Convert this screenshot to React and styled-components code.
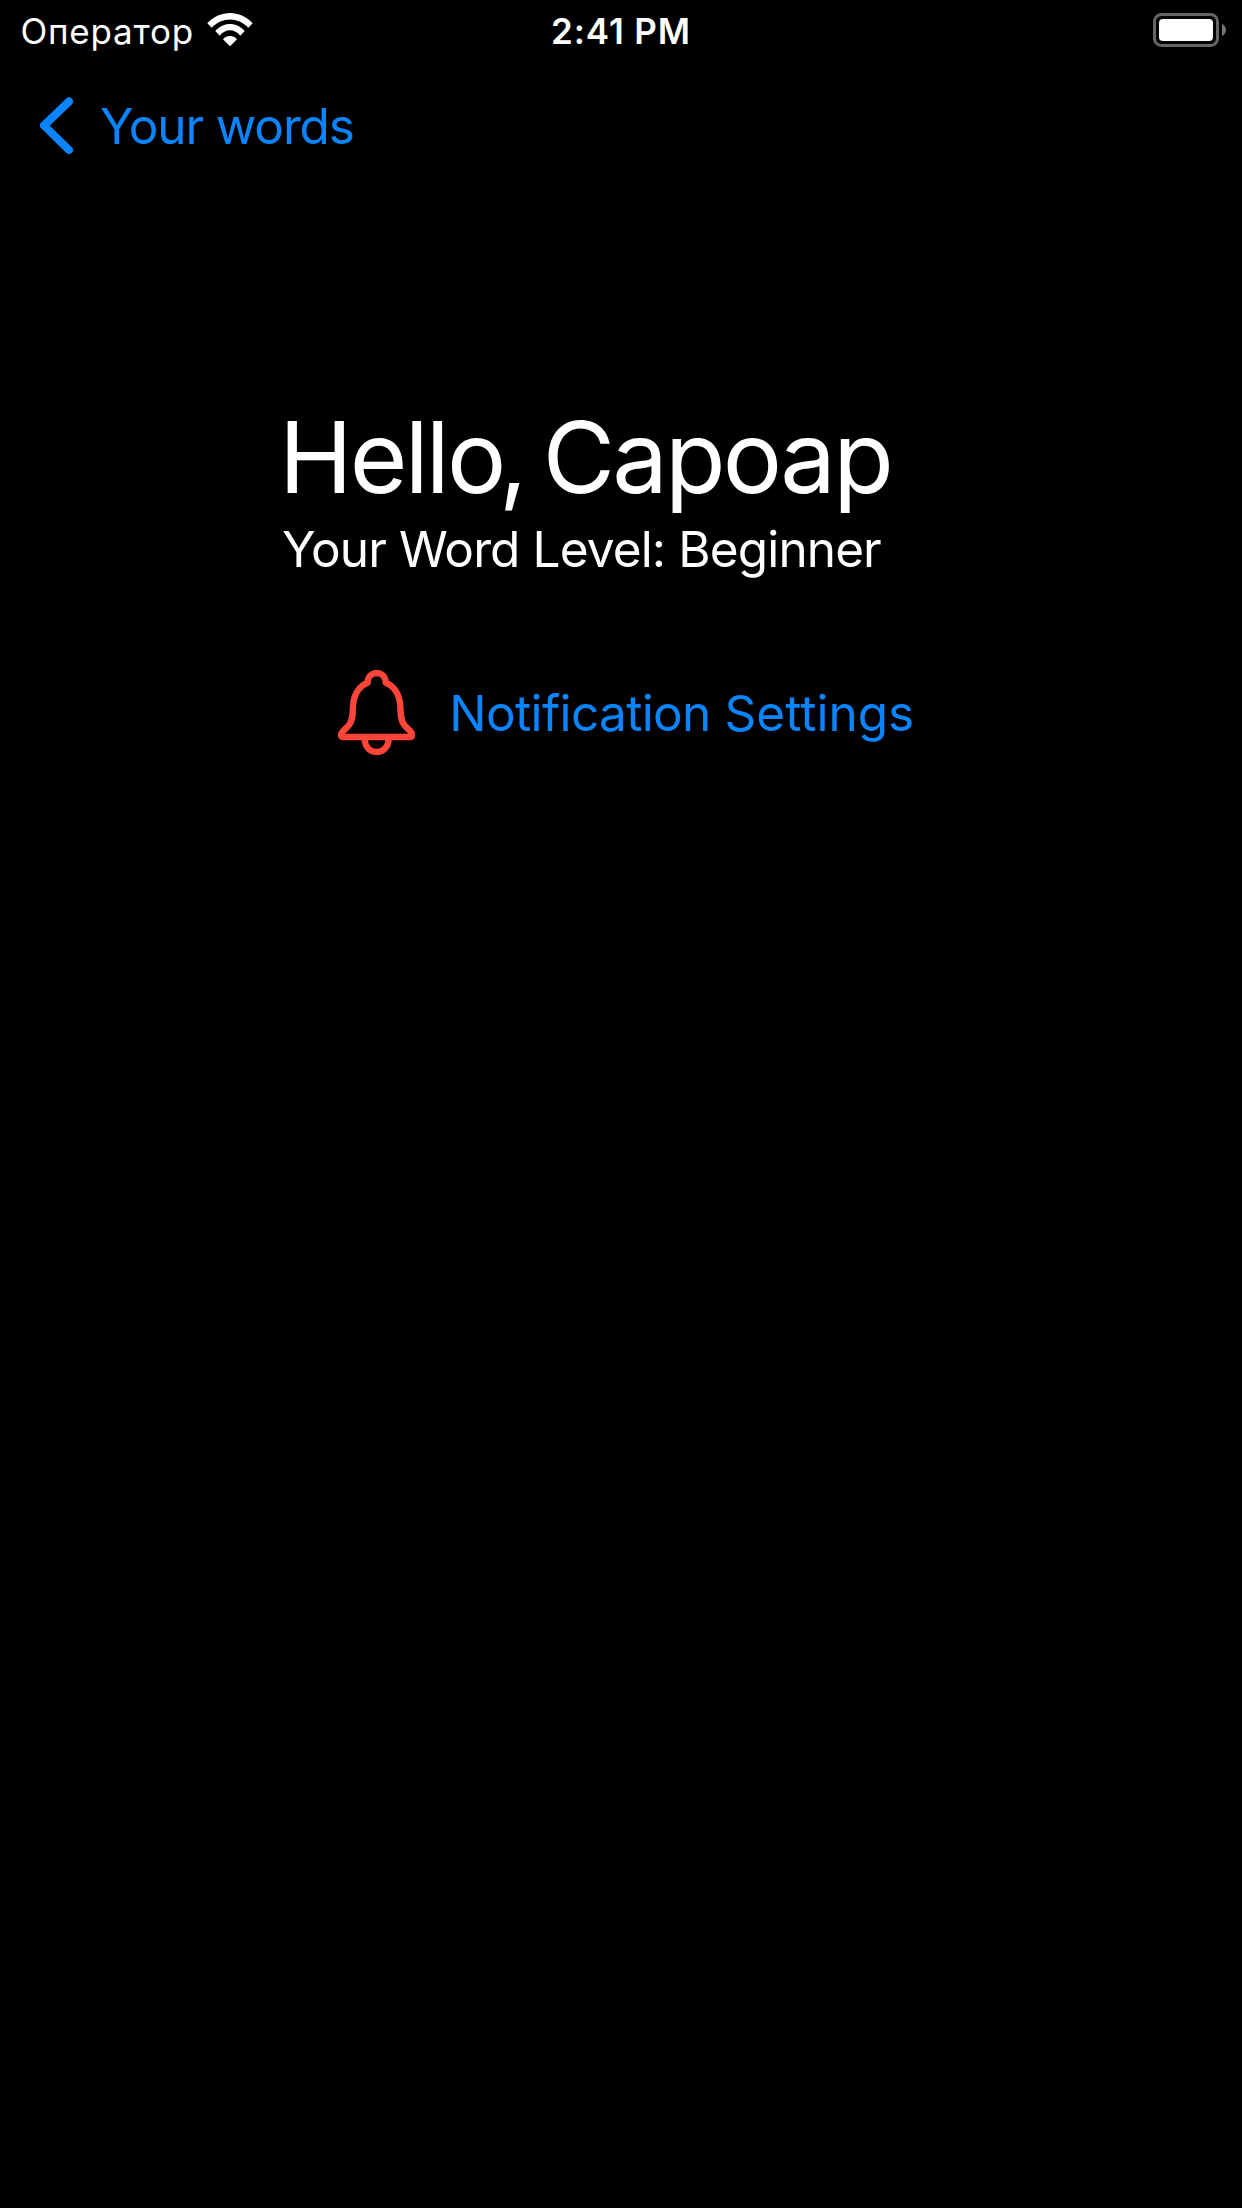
import React from "react";
import styled, { createGlobalStyle } from "styled-components";

const GlobalStyle = createGlobalStyle`
  html, body { margin: 0; padding: 0; background: #000; }
`;

const Screen = styled.main`
  display: flex;
  flex-direction: column;
  width: 1242px;
  height: 2208px;
  overflow: hidden;
  background: #000;
  color: #fff;
  font-family: Inter, "Liberation Sans", sans-serif;
`;

const StatusBar = styled.header`
  display: grid;
  grid-template-columns: 1fr auto 1fr;
  height: 60px;
  box-sizing: border-box;
  padding: 11px 16px 0;
`;

const Carrier = styled.div`
  display: flex;
  align-items: flex-start;
  gap: 13px;
  padding-left: 4.5px;
`;

const StatusText = styled.span`
  font-size: 35px;
  line-height: 40px;
  font-weight: ${(p) => p.$weight || 400};
  letter-spacing: ${(p) => p.$tracking || "0"};
  white-space: nowrap;
`;

const WifiIcon = styled.svg`
  display: block;
  width: 46px;
  height: 34px;
  margin-top: 2px;
`;

const BatteryIcon = styled.svg`
  display: block;
  justify-self: end;
  width: 73px;
  height: 34px;
  margin-top: 2px;
`;

const NavBar = styled.nav`
  display: flex;
  height: 132px;
  box-sizing: border-box;
  padding: 36px 40px 0;
`;

const BackButton = styled.button`
  display: flex;
  align-items: flex-start;
  gap: 26px;
  height: 60px;
  padding: 0;
  border: 0;
  background: none;
  color: #0a84ff;
  font: inherit;
`;

const Chevron = styled.svg`
  display: block;
  width: 34px;
  height: 58px;
  margin-top: 1px;
`;

const Label = styled.span`
  font-size: 49.5px;
  line-height: 60px;
  letter-spacing: ${(p) => p.$tracking || "0"};
  white-space: nowrap;
`;

const Tracked = styled.span`
  letter-spacing: ${(p) => p.$tracking};
`;

const Profile = styled.section`
  display: flex;
  flex-direction: column;
  align-items: flex-start;
  padding: 205px 0 0 282px;
`;

const Greeting = styled.h1`
  margin: 0 0 2px -3px;
  font-size: 99px;
  line-height: 120px;
  font-weight: 400;
  letter-spacing: -2.8px;
  word-spacing: -7px;
  white-space: nowrap;
`;

const SettingsLink = styled.button`
  display: flex;
  align-items: flex-start;
  gap: 34px;
  margin: 91px 0 0 56px;
  padding: 0;
  border: 0;
  background: none;
  color: #0a84ff;
  font: inherit;

  ${Label} {
    margin-top: 13px;
  }
`;

const BellIcon = styled.svg`
  display: block;
  width: 77.33px;
  height: 85.33px;
`;

export default function App() {
  return (
    <Screen>
      <GlobalStyle />
      <StatusBar>
        <Carrier>
          <StatusText $tracking="0.75px">Оператор</StatusText>
          <WifiIcon viewBox="621 38 138 102" fill="#fff">
            <path d="M622 69C660 28 720 28 758 69L745 82C714 49 666 49 635 82Z" />
            <path d="M646 92C670 64 710 64 734 92L721 106C704 84 676 84 659 106Z" />
            <path d="M669 117C680 104 700 104 711 117L690 138Z" />
          </WifiIcon>
        </Carrier>
        <StatusText $weight={600} $tracking="0.9px">2:41 PM</StatusText>
        <BatteryIcon viewBox="0 0 73 34">
          <rect x="1.5" y="1.5" width="63" height="31" rx="7" fill="none" stroke="#666" strokeWidth="3" />
          <rect x="6" y="6" width="54" height="22" rx="4" fill="#fff" />
          <path d="M69 11C74.300 13 74.300 21 69 23Z" fill="#757575" />
        </BatteryIcon>
      </StatusBar>
      <NavBar>
        <BackButton>
          <Chevron viewBox="0 0 34 58" fill="none" stroke="#0a84ff" strokeWidth="8" strokeLinecap="round" strokeLinejoin="round">
            <path d="M29 4.500L4 28.500L29 53" />
          </Chevron>
          <Label $tracking="-1.1px">Your words</Label>
        </BackButton>
      </NavBar>
      <Profile>
        <Greeting>Hell<Tracked $tracking="-7.5px">o</Tracked>, Capoap</Greeting>
        <Label $tracking="-0.87px">Your Word Level: Beginner</Label>
        <SettingsLink>
          <BellIcon viewBox="54 60 232 256" fill="none" stroke="#ff453a" strokeWidth="19" strokeLinejoin="round">
            <path d="M143 98C143 80 155 69 170 69S197 80 197 98C222 107 239 133 241 168C242 195 242 210 252 224C260 235 277 245 277 255C277 259 274 261 270 261H70C66 261 63 259 63 255C63 245 80 235 88 224C98 210 98 195 99 168C101 133 118 107 143 98Z" />
            <path d="M134 266C134 290 150 306 170 306S206 290 206 266" />
          </BellIcon>
          <Label><Tracked $tracking="-0.65px">Notification</Tracked> Settings</Label>
        </SettingsLink>
      </Profile>
    </Screen>
  );
}
